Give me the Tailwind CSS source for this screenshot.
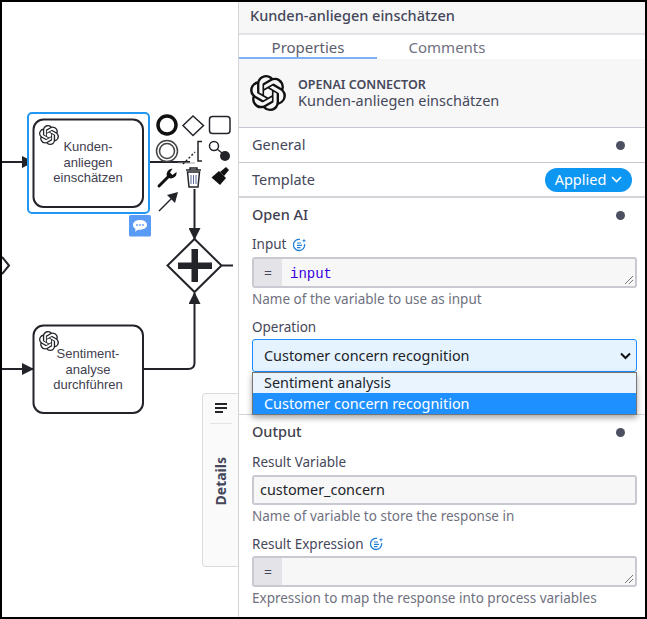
<!DOCTYPE html>
<html>
<head>
<meta charset="utf-8">
<script src="https://cdn.jsdelivr.net/npm/@tailwindcss/browser@4"></script>
<title>BPMN properties</title>
</head>
<body class="bg-white">
<!-- shared icons -->
<svg width="0" height="0" class="absolute">
  <defs>
    <symbol id="openai" viewBox="0 0 24 24">
      <path d="M22.2819 9.8211a5.9847 5.9847 0 0 0-.5157-4.9108 6.0462 6.0462 0 0 0-6.5098-2.9A6.0651 6.0651 0 0 0 4.9807 4.1818a5.9847 5.9847 0 0 0-3.9977 2.9 6.0462 6.0462 0 0 0 .7427 7.0966 5.98 5.98 0 0 0 .511 4.9107 6.051 6.051 0 0 0 6.5146 2.9001A5.9847 5.9847 0 0 0 13.2599 24a6.0557 6.0557 0 0 0 5.7718-4.2058 5.9894 5.9894 0 0 0 3.9977-2.9001 6.0557 6.0557 0 0 0-.7475-7.0729zm-9.022 12.6081a4.4755 4.4755 0 0 1-2.8764-1.0408l.1419-.0804 4.7783-2.7582a.7948.7948 0 0 0 .3927-.6813v-6.7369l2.02 1.1686a.071.071 0 0 1 .038.052v5.5826a4.504 4.504 0 0 1-4.4945 4.4944zm-9.6607-4.1254a4.4708 4.4708 0 0 1-.5346-3.0137l.142.0852 4.783 2.7582a.7712.7712 0 0 0 .7806 0l5.8428-3.3685v2.3324a.0804.0804 0 0 1-.0332.0615L9.74 19.9502a4.4992 4.4992 0 0 1-6.1408-1.6464zM2.3408 7.8956a4.485 4.485 0 0 1 2.3655-1.9728V11.6a.7664.7664 0 0 0 .3879.6765l5.8144 3.3543-2.0201 1.1685a.0757.0757 0 0 1-.071 0l-4.8303-2.7865A4.504 4.504 0 0 1 2.3408 7.872zm16.5963 3.8558L13.1038 8.364 15.1192 7.2a.0757.0757 0 0 1 .071 0l4.8303 2.7913a4.4944 4.4944 0 0 1-.6765 8.1042v-5.6772a.79.79 0 0 0-.407-.667zm2.0107-3.0231l-.142-.0852-4.7735-2.7818a.7759.7759 0 0 0-.7854 0L9.409 9.2297V6.8974a.0662.0662 0 0 1 .0284-.0615l4.8303-2.7866a4.4992 4.4992 0 0 1 6.6802 4.66zM8.3065 12.863l-2.02-1.1638a.0804.0804 0 0 1-.038-.0567V6.0742a4.4992 4.4992 0 0 1 7.3757-3.4537l-.142.0805L8.704 5.459a.7948.7948 0 0 0-.3927.6813zm1.0976-2.3654l2.602-1.4998 2.6069 1.4998v2.9994l-2.5974 1.4997-2.6067-1.4997Z" fill="currentColor"/>
    </symbol>
    <symbol id="feel" viewBox="0 0 14 14">
      <path d="M11.6 6.2A5.6 5.6 0 1 1 7 1.4" fill="none" stroke="currentColor" stroke-width="1.300"/>
      <path d="M4 5h4M4 7.300h5M4 9.600h3.500" fill="none" stroke="currentColor" stroke-width="1.200"/>
      <path d="M11 .6l.6 1.600 1.700.5-1.700.6-.6 1.600-.6-1.600-1.600-.6 1.600-.5z" fill="currentColor"/>
    </symbol>
    <marker id="arrow" viewBox="0 0 12 12" refX="11" refY="6" markerWidth="12" markerHeight="12" markerUnits="userSpaceOnUse" orient="auto">
      <path d="M0 0L12 6L0 12z" fill="#22242a"/>
    </marker>
  </defs>
</svg>

<div class="relative w-[647px] h-[619px] overflow-hidden bg-white border-2 border-black flex text-[#45475a] font-['Noto_Sans',sans-serif]">
  <!-- bpmn canvas -->
  <div class="relative w-[236px] shrink-0 h-full">
    <svg width="236" height="615" viewBox="2 2 236 615" class="block font-['Liberation_Sans',sans-serif]">
      <path d="M2 162H33" fill="none" stroke="#22242a" stroke-width="2" marker-end="url(#arrow)"/>
      <path d="M2 369H33" fill="none" stroke="#22242a" stroke-width="2" marker-end="url(#arrow)"/>
      <path d="M143 162H190" fill="none" stroke="#22242a" stroke-width="2"/>
      <path d="M178 163H195" fill="none" stroke="#aaaaaa" stroke-width="1"/>
      <path d="M143 369H188Q194.500 369 194.500 363V293" fill="none" stroke="#22242a" stroke-width="2" marker-end="url(#arrow)"/>
      <path d="M194.500 189V239" fill="none" stroke="#22242a" stroke-width="2" marker-end="url(#arrow)"/>
      <path d="M222 265.500H233" fill="none" stroke="#22242a" stroke-width="2"/>
      <path d="M2 257L9 265.500L2 274" fill="#fff" stroke="#22242a" stroke-width="2"/>

      <rect x="28" y="113" width="121" height="100" rx="4" fill="#fff" stroke="#2196f3" stroke-width="2"/>
      <rect x="33.500" y="119.500" width="109.500" height="87.500" rx="10" fill="#fff" stroke="#22242a" stroke-width="2"/>
      <svg x="39" y="125" width="20" height="20" class="text-[#22242a]"><use href="#openai"/></svg>
      <g font-size="13" fill="#3f4150" text-anchor="middle">
        <text x="88" y="151">Kunden-</text>
        <text x="88" y="167">anliegen</text>
        <text x="88" y="182">einschätzen</text>
      </g>

      <rect x="33.500" y="325.500" width="109.500" height="87.500" rx="10" fill="#fff" stroke="#22242a" stroke-width="2"/>
      <svg x="39" y="331" width="20" height="20" class="text-[#22242a]"><use href="#openai"/></svg>
      <g font-size="13" fill="#3f4150" text-anchor="middle">
        <text x="88" y="358">Sentiment-</text>
        <text x="88" y="374">analyse</text>
        <text x="88" y="389">durchführen</text>
      </g>

      <path d="M194.500 239L221.500 265.500L194.500 292L167.500 265.500Z" fill="#fff" stroke="#22242a" stroke-width="2"/>
      <path d="M191.500 249H198V262.500H212V269H198V282H191.500V269H178V262.500H191.500Z" fill="#22242a"/>

      <!-- context pad -->
      <circle cx="167" cy="125" r="9" fill="none" stroke="#111" stroke-width="3.500"/>
      <path d="M193 116L203.500 125.500L193 135.500L183 125.500Z" fill="none" stroke="#22242a" stroke-width="1.500"/>
      <rect x="209.500" y="116.500" width="20.500" height="17" rx="3" fill="none" stroke="#22242a" stroke-width="1.500"/>
      <circle cx="167" cy="151" r="10.500" fill="none" stroke="#444" stroke-width="1.500"/>
      <circle cx="167" cy="151" r="7.500" fill="none" stroke="#444" stroke-width="1.500"/>
      <path d="M183 164L195 152" fill="none" stroke="#22242a" stroke-width="1.500" stroke-dasharray="2 2"/>
      <path d="M202 141.500H198V161H202" fill="none" stroke="#22242a" stroke-width="1.500"/>
      <circle cx="214" cy="146" r="4.500" fill="none" stroke="#22242a" stroke-width="1.500"/>
      <path d="M217 149L222 153" stroke="#22242a" stroke-width="1.500"/>
      <circle cx="225" cy="156" r="5" fill="#22242a"/>
      <!-- wrench -->
      <path d="M159 186L168 177" fill="none" stroke="#111" stroke-width="3" stroke-linecap="round"/>
      <path d="M176.500 172A5.500 5.500 0 0 1 167 176.500A6 6 0 0 1 172.500 168.500L170 172.500L172.500 175Z" fill="#111"/>
      <!-- trash -->
      <path d="M186 170H201M190 170V168H197V170" fill="none" stroke="#22242a" stroke-width="1.500"/>
      <path d="M187.500 172L189 187H198L199.500 172Z" fill="#fff" stroke="#22242a" stroke-width="1.500"/>
      <path d="M191 175V184M193.500 175V184M196 175V184" stroke="#5a6a9a" stroke-width="1"/>
      <!-- brush -->
      <path d="M226 167L229 170L224 176L220 172Z" fill="#111"/>
      <path d="M219 171L226 178L220 185L211.500 177.500Z" fill="#111"/>
      <!-- arrow -->
      <path d="M159 211L173 197" fill="none" stroke="#22242a" stroke-width="1.500"/>
      <path d="M178 192L175 203L167 195Z" fill="#22242a"/>

      <!-- comment badge -->
      <rect x="129" y="215" width="22" height="21.500" rx="1.500" fill="#5a9bf6"/>
      <path d="M140 220c-4.400 0-7 2.300-7 5 0 1.700 1 3.100 2.600 4l-.6 2.700 3-2h2c4.400 0 7-2.300 7-4.700 0-2.700-2.600-5-7-5z" fill="#fff"/>
      <circle cx="137" cy="225" r=".9" fill="#5a9bf6"/><circle cx="140" cy="225" r=".9" fill="#5a9bf6"/><circle cx="143" cy="225" r=".9" fill="#5a9bf6"/>
    </svg>

    <!-- collapsed details tab -->
    <div class="absolute left-[200px] top-[391px] w-[36px] h-[174px] bg-[#fafafa] border border-r-0 border-[#dcdcdc] rounded-l flex flex-col items-center pt-[9px]">
      <div class="flex flex-col gap-[2px] items-start w-[12px]">
        <span class="block h-[2px] w-[12px] bg-[#22242a]"></span>
        <span class="block h-[2px] w-[12px] bg-[#22242a]"></span>
        <span class="block h-[2px] w-[8px] bg-[#22242a]"></span>
      </div>
      <div class="w-[22px] h-px bg-[#e4e4e4] mt-[10px]"></div>
      <div class="mt-[33px] [writing-mode:vertical-rl] rotate-180 text-[14px] leading-[16px] font-bold text-[#45475a]">Details</div>
    </div>
  </div>

  <!-- properties panel -->
  <div class="relative flex-1 border-l border-[#d4d4d8] flex flex-col text-[14.500px]">
    <div class="h-[31px] shrink-0 bg-[#f7f7f8] px-[11px] pb-[3px] flex items-center font-medium text-[#45475a]">Kunden-anliegen einschätzen</div>
    <div class="h-[2px] shrink-0 bg-[#e4e4e8]"></div>
    <div class="h-[24px] shrink-0 flex text-[15px] leading-[24px]">
      <div class="w-[138px] text-center border-b-2 border-[#7fb2f5] text-[#5b5d6e]">Properties</div>
      <div class="w-[138px] pl-[2px] text-center text-[#6f7180]">Comments</div>
    </div>
    <div class="h-[69px] shrink-0 bg-[#f7f7f8] border-b border-[#c8c8d2] px-[11px] flex items-center gap-[12px]">
      <svg width="36" height="36" class="text-[#111] shrink-0"><use href="#openai"/></svg>
      <div class="flex flex-col">
        <span class="text-[12.500px] leading-[15px] font-semibold uppercase text-[#45475a]">OpenAI Connector</span>
        <span class="text-[14.500px] leading-[17px] text-[#45475a]">Kunden-anliegen einschätzen</span>
      </div>
    </div>
    <div class="h-[35px] shrink-0 border-b border-[#c8c8d2] pl-[13px] pr-[20px] flex items-center justify-between">
      <span>General</span><span class="w-[9px] h-[9px] rounded-full bg-[#4d5060]"></span>
    </div>
    <div class="h-[35px] shrink-0 border-b-2 border-[#d4d4d8] pl-[13px] pr-[13px] flex items-center justify-between">
      <span>Template</span>
      <span class="h-[24px] w-[87px] rounded-full bg-[#0d96f2] text-white flex items-center justify-center gap-[5px]">Applied
        <svg width="11" height="7" viewBox="0 0 11 7"><path d="M1 1l4.500 4.500L10 1" fill="none" stroke="#fff" stroke-width="1.600"/></svg>
      </span>
    </div>

    <div class="pl-[13px] pr-[8px] flex flex-col">
      <div class="h-[34px] pr-[12px] flex items-center justify-between font-medium text-[#3f4150]">
        <span>Open AI</span><span class="w-[9px] h-[9px] rounded-full bg-[#4d5060]"></span>
      </div>
      <div class="h-[25px] flex items-center gap-[7px] text-[13.500px]">Input <svg width="14" height="14" class="text-[#1f7fd6]"><use href="#feel"/></svg></div>
      <div class="relative h-[31px] border-2 border-[#c9c9d1] rounded-[3px] bg-[#f7f7f8] flex">
        <div class="w-[28px] bg-[#e3e3e8] flex items-center justify-center text-[14px]">=</div>
        <div class="pl-[8px] pt-[3px] flex items-center font-['Liberation_Mono',monospace] text-[14px] text-[#3a00e0]">input</div>
        <svg class="absolute right-[1px] bottom-[1px]" width="10" height="10" viewBox="0 0 10 10"><path d="M1 9L9 1M5 9L9 5" stroke="#777" stroke-width="1"/></svg>
      </div>
      <div class="h-[23px] flex items-center text-[13.500px] text-[#6f7180]">Name of the variable to use as input</div>
      <div class="h-[28px] flex items-center text-[13.500px] pt-[4px]">Operation</div>
      <div class="relative">
        <div class="h-[33px] border border-[#1a8cff] rounded-[3px] bg-[#e5f3ff] pl-[11px] pr-[5px] flex items-center justify-between text-[14.400px] text-[#22242a]">
          <span>Customer concern recognition</span>
          <svg width="11" height="8" viewBox="0 0 11 8"><path d="M1 1.500l4.500 4.500L10 1.500" fill="none" stroke="#111" stroke-width="2"/></svg>
        </div>
        <!-- open select list -->
        <div class="absolute z-10 left-0 right-0 top-[33px] border border-[#767676] bg-[#e9f4ff] shadow-[0_3px_6px_rgba(0,0,0,0.35)] text-[14.400px]">
          <div class="h-[20px] pl-[11px] flex items-center text-[#22242a]">Sentiment analysis</div>
          <div class="h-[21px] pl-[11px] flex items-center bg-[#1e90ff] text-white">Customer concern recognition</div>
        </div>
      </div>
    </div>

    <div class="mt-[42px] border-t border-[#d4d4d8] pl-[13px] pr-[8px] flex flex-col">
      <div class="h-[34px] pr-[12px] flex items-center justify-between font-medium text-[#3f4150]">
        <span>Output</span><span class="w-[9px] h-[9px] rounded-full bg-[#4d5060]"></span>
      </div>
      <div class="h-[26px] flex items-center text-[13.500px]">Result Variable</div>
      <div class="h-[30px] border-2 border-[#c9c9d1] rounded-[3px] bg-[#f7f7f8] pl-[6px] flex items-center text-[14.400px] text-[#22242a]">customer_concern</div>
      <div class="h-[23px] flex items-center text-[13.500px] text-[#6f7180]">Name of variable to store the response in</div>
      <div class="h-[28px] flex items-center gap-[7px] text-[13.500px] pt-[4px]">Result Expression <svg width="14" height="14" class="text-[#1f7fd6]"><use href="#feel"/></svg></div>
      <div class="relative h-[31px] border-2 border-[#c9c9d1] rounded-[3px] bg-[#f7f7f8] flex">
        <div class="w-[28px] bg-[#e3e3e8] flex items-center justify-center text-[14px]">=</div>
        <svg class="absolute right-[1px] bottom-[1px]" width="10" height="10" viewBox="0 0 10 10"><path d="M1 9L9 1M5 9L9 5" stroke="#777" stroke-width="1"/></svg>
      </div>
      <div class="h-[23px] flex items-center text-[13.500px] text-[#6f7180]">Expression to map the response into process variables</div>
    </div>
  </div>
</div>
</body>
</html>
